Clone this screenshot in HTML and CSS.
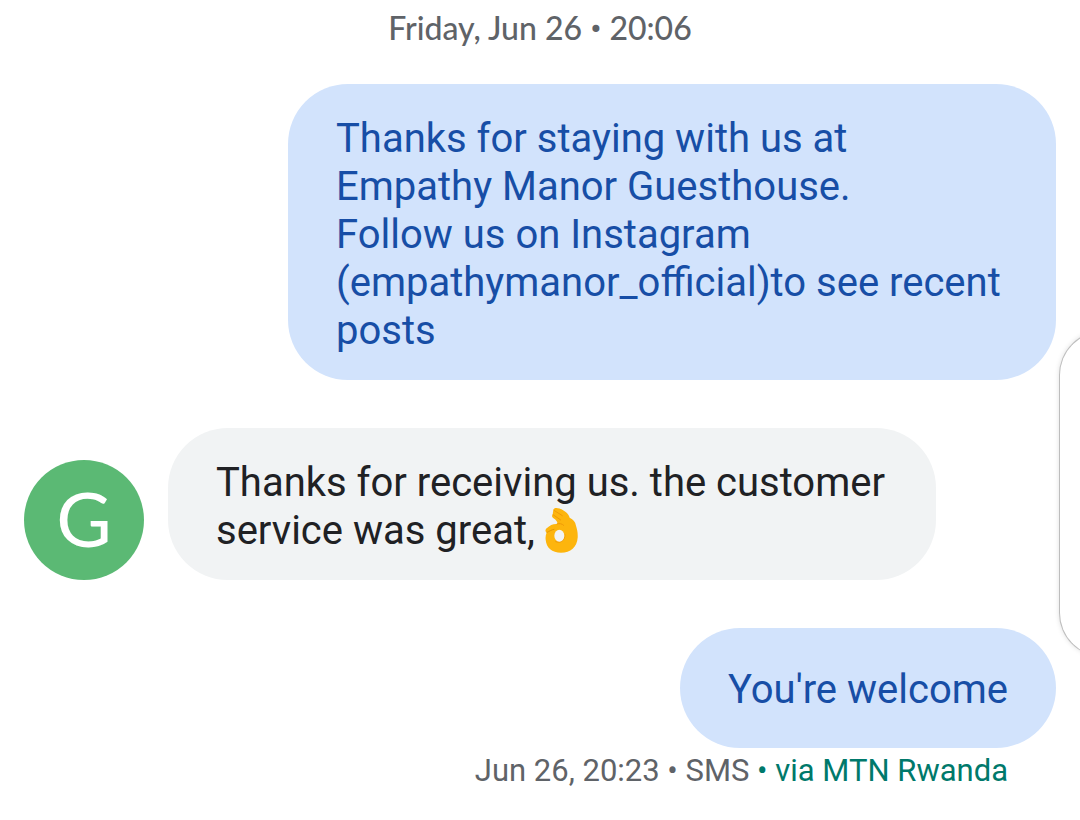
FILE: index.html
```
<!DOCTYPE html>
<html lang="en">
<head>
<meta charset="utf-8">
<meta name="viewport" content="width=device-width, initial-scale=1">
<title>Messages</title>
<link rel="stylesheet" href="styles.css">
</head>
<body>
<main class="thread">
  <time class="date">Friday, Jun 26 <span class="dot">•</span> 20:06</time>
  <p class="bubble sent">Thanks for staying with us at Empathy Manor Guesthouse.<br>Follow us on Instagram (empathymanor_official)to see recent posts</p>
  <div class="incoming">
    <div class="avatar">G</div>
    <p class="bubble received">Thanks for receiving us. the customer service was great,<svg class="emoji" viewBox="45 36 102 138" role="img" aria-label="OK hand">
      <path d="M74 40C80 36 96 42 106 50C113 55 117 61 119 68C130 74 136 80 138 92C141 102 144 112 143 128C141 156 122 173 93 173C66 173 49 158 47 134C46 127 47 119 50 113C45 110 45 103 51 99C59 91 70 86 81 87C84 83 80 78 75 73C69 69 64 65 67 60C70 57 68 54 69 51C70 46 70 42 74 40Z" fill="#fdb50d"/>
      <path d="M50 113C58 108 66 104 73 103" fill="none" stroke="#e59600" stroke-width="3"/>
      <path d="M72 46L97 62M69 59L92 75M81 87C88 84 96 86 101 91M105 119C105 137 91 146 77 140" fill="none" stroke="#ef9a08" stroke-width="3" stroke-linecap="round"/>
      <ellipse cx="88" cy="122" rx="15" ry="18" fill="#f1f3f4"/>
    </svg></p>
  </div>
  <p class="bubble sent reply">You're welcome</p>
  <p class="meta">Jun 26, 20:23 • SMS <span class="carrier">• via MTN Rwanda</span></p>
</main>
<div class="edge-handle"></div>
</body>
</html>
```
FILE: styles.css
```
* { box-sizing: border-box; }
body {
  margin: 0;
  background: #fff;
  font-family: Roboto, "Liberation Sans", sans-serif;
  overflow-x: hidden;
}
.thread {
  display: flex;
  flex-direction: column;
  padding: 8px 24px 24px;
}
.date {
  align-self: center;
  font-family: Lato, sans-serif;
  font-size: 32px;
  line-height: 40px;
  font-weight: 500;
  color: #5f6368;
}
.dot {
  font-family: Roboto, sans-serif;
  line-height: 1;
}
.bubble {
  margin: 0;
  max-width: 768px;
  padding: 31px 48px 25px;
  border-radius: 60px;
  font-size: 40px;
  line-height: 48px;
}
.sent {
  align-self: flex-end;
  margin-top: 36px;
  background: #d2e3fc;
  color: #174ea6;
}
.incoming {
  display: flex;
  align-items: flex-end;
  gap: 24px;
  margin-top: 48px;
}
.avatar {
  flex: none;
  display: grid;
  place-items: center;
  width: 120px;
  height: 120px;
  padding-bottom: 4px;
  border-radius: 50%;
  background: #5bb974;
  color: #fff;
  font-family: Lato, sans-serif;
  font-size: 76px;
  line-height: 1;
}
.received {
  background: #f1f3f4;
  color: #202124;
}
.emoji {
  width: 34px;
  height: 46px;
  margin: -11px 0 -5px 10px;
  vertical-align: middle;
}
.reply {
  margin-top: 48px;
  padding: 38px 48px 34px;
}
.meta {
  align-self: flex-end;
  margin: 3px 48px 0 0;
  font-size: 31px;
  line-height: 40px;
  color: #5f6368;
}
.carrier { color: #00796b; }
.edge-handle {
  position: absolute;
  top: 331px;
  right: -24px;
  width: 45px;
  height: 326px;
  border: 1px solid #bdbdbd;
  border-right: 0;
  border-radius: 44px 0 0 44px;
  background: #fff;
  box-shadow: 0 0 5px #00000020;
}
```
